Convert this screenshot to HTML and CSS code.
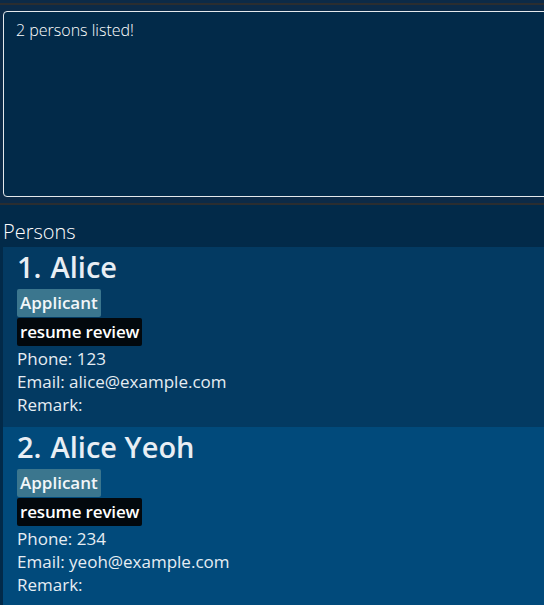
FILE: index.html
```html
<!DOCTYPE html>
<html>
<head>
<meta charset="utf-8">
<link rel="stylesheet" href="styles.css">
</head>
<body>
<div class="app">
  <div class="top-gap"></div>
  <div class="divider"></div>
  <div class="result-pane">
    <div class="result-box">2 persons listed!</div>
  </div>
  <div class="divider"></div>
  <div class="list-pane">
    <div class="list-title">Persons</div>
    <div class="list">
      <div class="card card-odd">
        <div class="name"><span class="index">1.</span>Alice</div>
        <div class="tags"><span class="tag tag-role">Applicant</span></div>
        <div class="tags"><span class="tag tag-stage">resume review</span></div>
        <div class="field">Phone: 123</div>
        <div class="field">Email: alice@example.com</div>
        <div class="field">Remark:</div>
      </div>
      <div class="card card-even">
        <div class="name"><span class="index">2.</span>Alice Yeoh</div>
        <div class="tags"><span class="tag tag-role">Applicant</span></div>
        <div class="tags"><span class="tag tag-stage">resume review</span></div>
        <div class="field">Phone: 234</div>
        <div class="field">Email: yeoh@example.com</div>
        <div class="field">Remark:</div>
      </div>
    </div>
  </div>
</div>
</body>
</html>
```
FILE: styles.css
```css
html, body {
  margin: 0;
  padding: 0;
  background: #022a49;
  overflow: hidden;
}
.app {
  width: 544px;
  height: 605px;
  display: flex;
  flex-direction: column;
  font-family: "Open Sans", "Noto Sans", sans-serif;
  color: #e6edf3;
  overflow: hidden;
}
.top-gap {
  height: 3px;
  background: #0c2a47;
  flex: none;
}
.divider {
  height: 2px;
  background: #2a2d30;
  flex: none;
}
.result-pane {
  padding: 6px 0 6px 3px;
  background: #0c2a47;
  flex: none;
}
.result-box {
  height: 174px;
  margin-right: -6px;
  border: 1px solid #e4e8ec;
  border-radius: 4px;
  background: #022a49;
  padding: 7px 12px 3px;
  font-weight: 300;
  font-size: 16px;
  line-height: 22px;
  color: #ffffff;
}
.list-pane {
  flex: 1;
  display: flex;
  flex-direction: column;
  background: #022a49;
}
.list-title {
  padding: 14px 0 0 3px;
  height: 28px;
  font-weight: 300;
  font-size: 20px;
  line-height: 26px;
  color: #ffffff;
}
.list {
  display: flex;
  flex-direction: column;
  padding-left: 3px;
}
.card {
  height: 180px;
  padding: 1px 0 0 14px;
  box-sizing: border-box;
  flex: none;
}
.card-odd { background: #033a62; }
.card-even { background: #014a7b; }
.name {
  font-size: 29px;
  font-weight: 600;
  line-height: 38px;
  color: #e8eef4;
  margin-bottom: 3px;
}
.index {
  margin-right: 9px;
}
.tags {
  display: flex;
  margin-bottom: 1px;
}
.tag {
  display: inline-block;
  height: 28px;
  line-height: 28px;
  padding: 0 3px;
  border-radius: 2px;
  font-size: 17px;
  font-weight: 600;
  color: #f2f6f9;
}
.tag-role { background: #3b768e; }
.tag-stage { background: #02080d; color: #ffffff; letter-spacing: -0.15px; }
.field {
  font-size: 17px;
  line-height: 23px;
  color: #e6edf3;
}
```
